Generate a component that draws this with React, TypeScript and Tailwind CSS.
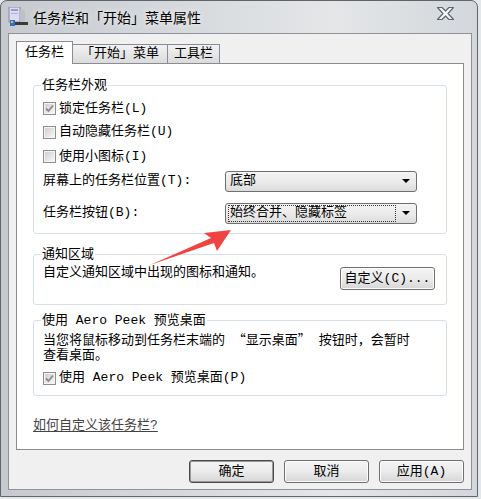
import React from "react";

function Checkbox({ checked }: { checked?: boolean }) {
  return (
    <span className="w-[13px] h-[13px] border border-[#8e8f8f] bg-[#f4f4f4] p-[1px] flex shrink-0">
      <span className="flex-1 bg-linear-to-br from-[#cfcfcf] to-[#f6f6f6] flex items-center justify-center">
        {checked && (
          <svg width="9" height="9" viewBox="0 0 9 9">
            <path d="M1 4.5 L3.5 7 L8 1.5" fill="none" stroke="#8a8a8a" strokeWidth="1.8" />
          </svg>
        )}
      </span>
    </span>
  );
}

function Select({ value, focus }: { value: string; focus?: boolean }) {
  return (
    <div className="w-[192px] h-[21px] border border-[#707070] rounded-[3px] bg-linear-to-b from-[#f4f4f4] via-[#ebebeb] to-[#dcdcdc] flex items-center pl-[2px] pr-[6px]">
      <span
        className={
          focus
            ? "h-[17px] w-[168px] border border-dotted border-[#333] flex items-center pl-[1px]"
            : "h-[17px] flex items-center pl-[2px]"
        }
      >
        {value}
      </span>
      <span className="ml-auto w-0 h-0 border-l-[4px] border-r-[4px] border-t-[4px] border-l-transparent border-r-transparent border-t-black" />
    </div>
  );
}

function Button({ label, primary }: { label: string; primary?: boolean }) {
  return (
    <div
      className={
        "w-[85px] h-[23px] rounded-[3px] bg-linear-to-b from-[#f4f4f4] via-[#ebebeb] to-[#d6d6d6] flex items-center justify-center " +
        (primary
          ? "border border-[#4a4a4a] shadow-[inset_0_0_0_1px_#9a9a9a]"
          : "border border-[#707070] shadow-[inset_0_0_0_1px_#fcfcfc]")
      }
    >
      {label}
    </div>
  );
}

function Group({ title, children, className }: { title: string; children: React.ReactNode; className?: string }) {
  return (
    <fieldset className={"border border-[#d5dfe5] rounded-[3px] px-[7px] " + (className ?? "")}>
      <legend className="px-[1px] h-[13px] leading-[13px]">{title}</legend>
      {children}
    </fieldset>
  );
}

export default function App() {
  return (
    <div className="relative w-[481px] h-[499px] bg-[#e4e7ea] text-[13px] leading-[14px] text-black font-['Liberation_Mono','Noto_Sans_CJK_SC',monospace]">
      <div className="w-[478px] h-[497px] rounded-t-[7px] border border-[#60656b] bg-linear-to-r from-[#c6cacf] via-[#e4e6e8] via-70% to-[#d3d7db] flex flex-col pl-[7px] pr-[5px] pb-[6px]">
        <div className="h-[32px] flex items-center shrink-0">
          <svg width="20" height="20" viewBox="0 0 20 20" className="mt-[-1px]">
            <rect x="1" y="0" width="11" height="15" fill="#dcdcf0" stroke="#8888a8" strokeWidth="1" />
            <rect x="3" y="2" width="7" height="2" fill="#9b9bc8" />
            <rect x="3" y="6" width="7" height="1" fill="#b0b0d0" />
            <rect x="12" y="3" width="5" height="12" fill="#c0c0c8" />
            <rect x="4" y="15" width="16" height="3" fill="#3a3a3a" />
            <rect x="2" y="13" width="5" height="6" fill="#2f6fd0" />
            <rect x="3" y="14" width="2" height="2" fill="#f0c020" />
          </svg>
          <span className="ml-[5px] text-[14px] font-['Noto_Sans_CJK_SC',sans-serif] [text-shadow:0_0_6px_#fff]">
            任务栏和「开始」菜单属性
          </span>
          <svg width="19" height="15" viewBox="0 0 19 15" className="ml-auto mr-[17px] mt-[-7px]">
            <path
              d="M1.5 1.5 H6 L9.5 5 L13 1.5 H17.5 L12 7.5 L17.5 13.5 H13 L9.5 10 L6 13.5 H1.5 L7 7.5 Z"
              fill="#f6f7f8"
              stroke="#5d6773"
              strokeWidth="1.2"
              strokeLinejoin="round"
            />
          </svg>
        </div>
        <div className="flex-1 border border-[#8e9399] bg-[#f0f0f0] flex flex-col pl-[7px] pr-[7px] pt-[7px]">
          <div className="flex items-end h-[22px] shrink-0">
            <div className="h-[23px] w-[57px] border border-b-0 border-[#898c95] bg-white flex items-center justify-center mb-[-1px] z-10 relative">
              任务栏
            </div>
            <div className="h-[19px] w-[95px] border border-b-0 border-l-0 border-[#898c95] bg-linear-to-b from-[#f2f2f2] to-[#dbdbdb] flex items-center justify-center">
              「开始」菜单
            </div>
            <div className="h-[19px] w-[52px] border border-b-0 border-l-0 border-[#898c95] bg-linear-to-b from-[#f2f2f2] to-[#dbdbdb] flex items-center justify-center">
              工具栏
            </div>
          </div>
          <div className="h-[387px] border border-[#898c95] bg-white flex flex-col px-[16px] pt-[15px]">
            <Group title="任务栏外观" className="pb-[8px]">
              <div className="flex flex-col pl-[2px] pt-[5px]">
                <div className="h-[23px] flex items-center gap-[3px]">
                  <Checkbox checked />
                  <span>锁定任务栏(L)</span>
                </div>
                <div className="h-[24px] flex items-center gap-[3px]">
                  <Checkbox />
                  <span>自动隐藏任务栏(U)</span>
                </div>
                <div className="h-[25px] flex items-center gap-[3px]">
                  <Checkbox />
                  <span>使用小图标(I)</span>
                </div>
                <div className="h-[24px] flex items-center">
                  <span className="w-[182px]">屏幕上的任务栏位置(T):</span>
                  <Select value="底部" />
                </div>
                <div className="h-[24px] mt-[8px] flex items-center">
                  <span className="w-[182px]">任务栏按钮(B):</span>
                  <Select value="始终合并、隐藏标签" focus />
                </div>
              </div>
            </Group>
            <Group title="通知区域" className="mt-[14px] pb-[14px]">
              <div className="flex items-start pl-[2px] pt-[5px] pr-[4px]">
                <span>自定义通知区域中出现的图标和通知。</span>
                <div className="ml-auto mt-[1px] w-[95px] h-[23px] rounded-[3px] border border-[#707070] shadow-[inset_0_0_0_1px_#fcfcfc] bg-linear-to-b from-[#f4f4f4] via-[#ebebeb] to-[#d6d6d6] flex items-center justify-center">
                  自定义(C)...
                </div>
              </div>
            </Group>
            <Group title="使用 Aero Peek 预览桌面" className="mt-[9px] pb-[8px]">
              <div className="flex flex-col pl-[2px] pt-[4px]">
                <p className="leading-[15px]">
                  当您将鼠标移动到任务栏末端的{" "}
                  <span className="font-['Noto_Sans_CJK_SC',sans-serif]">“显示桌面”</span> 按钮时，会暂时
                  <br />
                  查看桌面。
                </p>
                <div className="h-[18px] mt-[6px] flex items-center gap-[3px]">
                  <Checkbox checked />
                  <span>使用 Aero Peek 预览桌面(P)</span>
                </div>
              </div>
            </Group>
            <a className="mt-[23px] self-start text-[#444] underline underline-offset-2">如何自定义该任务栏?</a>
          </div>
          <div className="flex justify-end gap-[10px] pt-[10px]">
            <Button label="确定" primary />
            <Button label="取消" />
            <Button label="应用(A)" />
          </div>
        </div>
      </div>
      <svg width="481" height="499" className="absolute left-0 top-0 pointer-events-none">
        <polygon points="231,230 204,233 211,238 150,265 214,243 217,251" fill="#f24343" />
      </svg>
    </div>
  );
}
